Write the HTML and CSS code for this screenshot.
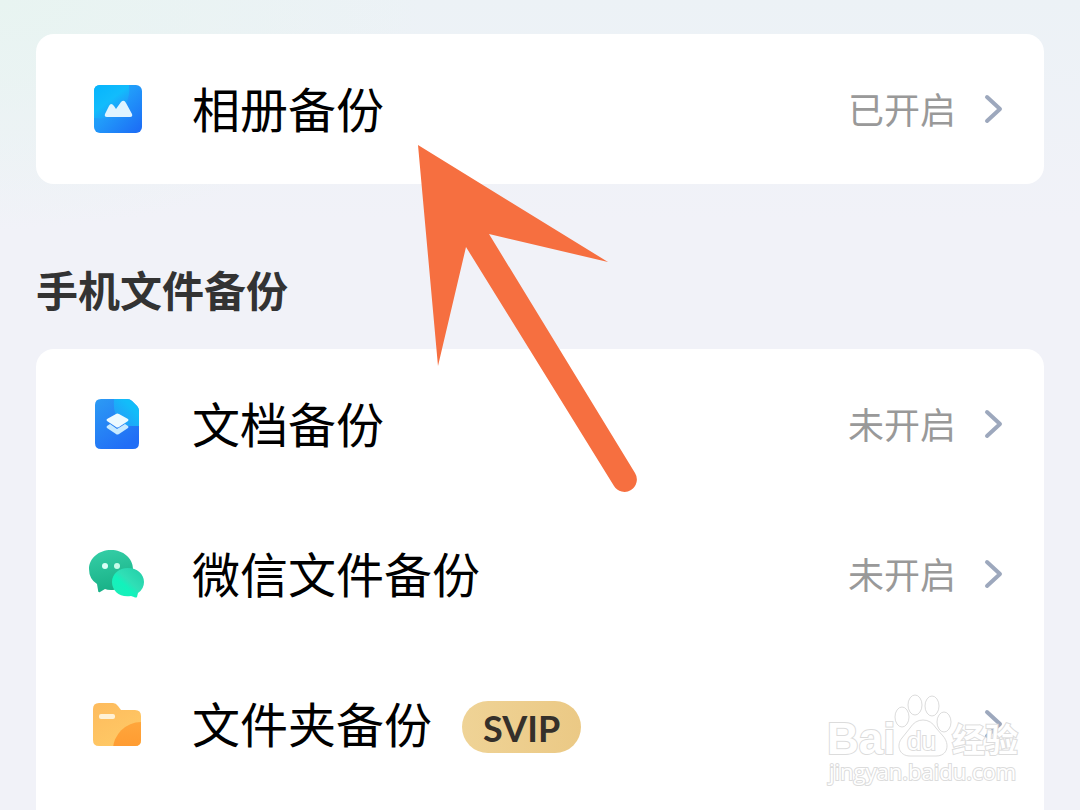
FILE: index.html
```html
<!DOCTYPE html>
<html lang="zh-CN">

<head>
    <meta charset="UTF-8">
    <meta name="viewport" content="width=device-width, initial-scale=1.0">
    <title>备份</title>
    <link rel="stylesheet" href="styles.css">
</head>

<body>
    <main class="page">
        <section class="card">
            <a class="row" href="#album">
                <svg class="icon" viewBox="0 0 56 56" aria-hidden="true">
                    <defs>
                        <linearGradient id="blue" x1="0" y1="0" x2="1" y2="1">
                            <stop offset="0" stop-color="#10b5fa" />
                            <stop offset="0.45" stop-color="#219bfa" />
                            <stop offset="1" stop-color="#1c69f5" />
                        </linearGradient>
                        <linearGradient id="album-light" x1="0" y1="0" x2="0.8" y2="1">
                            <stop offset="0" stop-color="#06b4fc" />
                            <stop offset="0.5" stop-color="#12bcfc" />
                            <stop offset="1" stop-color="#219bfa" stop-opacity="0" />
                        </linearGradient>
                    </defs>
                    <rect x="4" y="4" width="48" height="48" rx="6" fill="url(#blue)" />
                    <path d="M10 4H39Q41 23 27 32Q17 39 4 37V10Q4 4 10 4Z" fill="url(#album-light)" />
                    <path d="M17 36Q14 36 15 33L19 25Q21 21 24 25L26 28L31 21Q34 18 36 22L42 33Q43 36 40 36Z" fill="#e0f4ff" />
                </svg>
                <span class="name">相册备份</span>
                <span class="status">已开启</span>
                <svg class="arrow" viewBox="0 0 20 30" aria-hidden="true">
                    <path d="M3 3L16 15L3 27" />
                </svg>
            </a>
        </section>

        <h2>手机文件备份</h2>

        <section class="card card-last">
            <a class="row" href="#document">
                <svg class="icon" viewBox="0 0 56 56" aria-hidden="true">
                    <defs>
                        <linearGradient id="doc" x1="0" y1="0" x2="0.6" y2="1">
                            <stop offset="0" stop-color="#2c9bf4" />
                            <stop offset="1" stop-color="#216ef6" />
                        </linearGradient>
                        <linearGradient id="doc-light" x1="1" y1="0" x2="0" y2="1">
                            <stop offset="0.3" stop-color="#12bdf9" />
                            <stop offset="1" stop-color="#2a92f8" />
                        </linearGradient>
                    </defs>
                    <path d="M11 3H37Q40 3 42 5L47 10Q49 12 49 15V47Q49 53 43 53H11Q5 53 5 47V9Q5 3 11 3Z" fill="url(#doc)" />
                    <path d="M24 3H37Q40 3 42 5L47 10Q49 12 49 15V30H38Q22 24 24 3Z" fill="url(#doc-light)" />
                    <path d="M26 18Q27 17 29 18L38 23Q39 24 38 25L29 31Q27 32 26 31L17 25Q16 24 17 23Z" fill="#edfaff" />
                    <path d="M17 30L20 28L27 33L35 28L38 30Q39 31 38 32L29 38Q27 39 26 38L17 32Q16 31 17 30Z" fill="#c7eaff" />
                </svg>
                <span class="name">文档备份</span>
                <span class="status">未开启</span>
                <svg class="arrow" viewBox="0 0 20 30" aria-hidden="true">
                    <path d="M3 3L16 15L3 27" />
                </svg>
            </a>
            <a class="row" href="#wechat">
                <svg class="icon" viewBox="0 0 56 56" aria-hidden="true">
                    <defs>
                        <linearGradient id="bubble" x1="0.2" y1="0" x2="0.4" y2="1">
                            <stop offset="0" stop-color="#34cea6" />
                            <stop offset="1" stop-color="#18b086" />
                        </linearGradient>
                        <linearGradient id="bubble-small" x1="1" y1="0" x2="0" y2="1">
                            <stop offset="0" stop-color="#22cca6" />
                            <stop offset="0.45" stop-color="#30dfb6" />
                            <stop offset="0.6" stop-color="#12f2bc" />
                            <stop offset="1" stop-color="#20ecb8" />
                        </linearGradient>
                    </defs>
                    <path d="M21 4C33 4 43 12 43 23S33 44 21 44Q17 44 15 43L10 46Q8 47 8 44L7 38Q-1 33 -1 23C-1 12 9 4 21 4Z" fill="url(#bubble)" />
                    <path d="M38 22C47 22 54 28 54 36Q54 43 48 47L47 51Q46 52 44 51L41 50C30 52 22 45 22 36C22 28 29 22 38 22Z" fill="url(#bubble-small)" />
                    <circle cx="15" cy="20" r="3" fill="#d9fff6" />
                    <circle cx="27" cy="20" r="3" fill="#c6fbe9" />
                </svg>
                <span class="name">微信文件备份</span>
                <span class="status">未开启</span>
                <svg class="arrow" viewBox="0 0 20 30" aria-hidden="true">
                    <path d="M3 3L16 15L3 27" />
                </svg>
            </a>
            <a class="row" href="#folder">
                <svg class="icon" viewBox="0 0 56 56" aria-hidden="true">
                    <defs>
                        <linearGradient id="folder-fill" x1="0" y1="0" x2="0.5" y2="1">
                            <stop offset="0" stop-color="#fdb95c" />
                            <stop offset="1" stop-color="#ffca66" />
                        </linearGradient>
                        <linearGradient id="folder-corner" x1="0" y1="0" x2="0" y2="1">
                            <stop offset="0" stop-color="#ffa63c" />
                            <stop offset="0.5" stop-color="#ff9a30" />
                        </linearGradient>
                        <clipPath id="folder-shape">
                            <path d="M9 7H23Q26 7 28 10L31 14H45Q51 14 51 20V44Q51 50 45 50H9Q3 50 3 44V13Q3 7 9 7Z" />
                        </clipPath>
                    </defs>
                    <g clip-path="url(#folder-shape)">
                        <rect width="56" height="56" fill="url(#folder-fill)" />
                        <circle cx="51" cy="54" r="28" fill="url(#folder-corner)" />
                    </g>
                    <rect x="9" y="18" width="16" height="5" rx="2" fill="#fff1d5" />
                </svg>
                <span class="name">文件夹备份</span>
                <span class="badge">SVIP</span>
                <svg class="arrow" viewBox="0 0 20 30" aria-hidden="true">
                    <path d="M3 3L16 15L3 27" />
                </svg>
            </a>
        </section>

        <svg class="pointer" viewBox="0 0 220 348" aria-hidden="true">
            <path d="M0 0L190 117L71 89L217 328A12 12 0 0 1 196 341L48 102L20 221Z" />
        </svg>

        <svg class="watermark" viewBox="0 0 210 110" aria-label="Baidu 经验">
            <text class="mark-bai" x="7" y="69">Bai</text>
            <g class="paw">
                <ellipse cx="82" cy="32" rx="7" ry="10" />
                <ellipse cx="95" cy="20" rx="7" ry="10" />
                <ellipse cx="112" cy="21" rx="7" ry="10" />
                <ellipse cx="124" cy="37" rx="7" ry="10" />
                <path d="M103 35Q111 35 116 43L123 51C130 59 128 71 116 71H90C79 71 76 60 82 53L90 43Q95 35 103 35Z" />
            </g>
            <text class="mark-du" x="87" y="65">du</text>
            <text class="mark-cn" x="132" y="67">经验</text>
            <text class="mark-url" x="9" y="95">jingyan.baidu.com</text>
        </svg>
    </main>
</body>

</html>
```

FILE: styles.css
```css
* {
    box-sizing: border-box;
}

body {
    margin: 0;
    font-family: "Noto Sans CJK SC", sans-serif;
    background: #f1f2f8;
}

.page {
    position: relative;
    display: flex;
    flex-direction: column;
    min-height: 100vh;
    padding: 34px 36px 0;
    background:
        radial-gradient(ellipse 420px 230px at 0 0, #e8f4f1, transparent),
        linear-gradient(#ecf2f6, #f1f2f8 220px);
}

.card {
    border-radius: 18px;
    background: #fff;
}

.card-last {
    flex: 1;
    border-radius: 18px 18px 0 0;
}

.row {
    display: flex;
    align-items: center;
    height: 150px;
    padding: 0 40px 0 54px;
    color: #000;
    text-decoration: none;
}

.icon {
    width: 56px;
    height: 56px;
    margin-right: 46px;
    overflow: visible;
}

.name {
    padding-bottom: 4px;
    font-size: 48px;
    line-height: 60px;
}

.status {
    margin-left: auto;
    padding-bottom: 2px;
    font-size: 36px;
    line-height: 60px;
    color: #999;
}

.arrow {
    width: 20px;
    height: 30px;
    margin-left: 28px;
    fill: none;
    stroke: #9da8bd;
    stroke-width: 4;
    stroke-linecap: round;
    stroke-linejoin: round;
}

.badge {
    margin: 6px auto 0 30px;
    padding: 2px 21px 0;
    border-radius: 26px;
    background: linear-gradient(90deg, #efd396, #ebc985);
    color: #35302a;
    font-family: Lato, sans-serif;
    font-size: 36px;
    font-weight: 700;
    line-height: 50px;
}

h2 {
    margin: 0;
    padding: 75px 0 30px;
    font-size: 42px;
    font-weight: 700;
    line-height: 60px;
    color: #333;
}

.pointer {
    position: absolute;
    top: 145px;
    left: 418px;
    width: 220px;
    height: 348px;
    fill: #f66f40;
    pointer-events: none;
}

.watermark {
    position: absolute;
    top: 685px;
    right: 50px;
    width: 210px;
    height: 110px;
    font-family: "Liberation Sans", sans-serif;
    fill: #fff;
    stroke: #dcdcdc;
    stroke-width: 1;
    pointer-events: none;
}

.watermark text {
    paint-order: stroke;
    stroke-width: 2;
}

.mark-bai {
    font-size: 44px;
    font-weight: 700;
}

.mark-du {
    font-size: 26px;
}

.mark-cn {
    font-family: "Noto Sans CJK SC", sans-serif;
    font-size: 33px;
    font-weight: 700;
}

.mark-url {
    font-family: "Open Sans", sans-serif;
    font-size: 22px;
}
```
